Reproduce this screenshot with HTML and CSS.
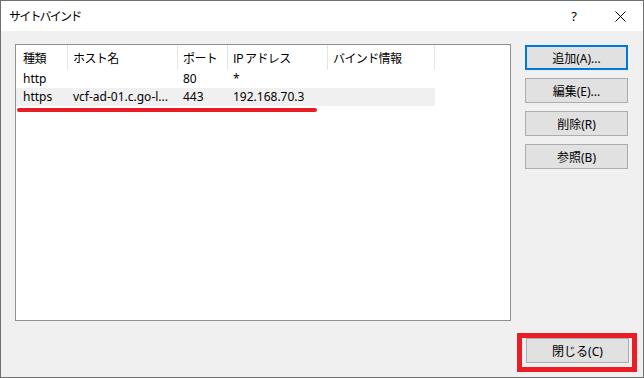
FILE: index.html
```html
<!DOCTYPE html>
<html lang="ja">
<head>
<meta charset="utf-8">
<title>サイトバインド</title>
<link rel="stylesheet" href="styles.css">
</head>
<body>
<div class="window">
  <div class="titlebar">
    <span class="title">サイトバインド</span>
    <div class="title-actions">
      <span class="help">?</span>
      <span class="close">
        <svg width="11" height="11" viewBox="0 0 11 11"><path d="M0.5 0.5 L10.5 10.5 M10.5 0.5 L0.5 10.5" stroke="#000" stroke-width="1" fill="none"/></svg>
      </span>
    </div>
  </div>
  <div class="content">
    <div class="main">
      <div class="listview">
        <div class="lv-header lv-grid">
          <div class="hcell first">種類</div>
          <div class="hcell">ホスト名</div>
          <div class="hcell">ポート</div>
          <div class="hcell">IP アドレス</div>
          <div class="hcell">バインド情報</div>
        </div>
        <div class="lv-row lv-grid">
          <div class="cell first">http</div>
          <div class="cell"></div>
          <div class="cell">80</div>
          <div class="cell">*</div>
          <div class="cell"></div>
        </div>
        <div class="lv-row lv-grid selected">
          <div class="cell first">https</div>
          <div class="cell">vcf-ad-01.c.go-l...</div>
          <div class="cell">443</div>
          <div class="cell">192.168.70.3</div>
          <div class="cell"></div>
          <span class="underline"></span>
        </div>
      </div>
      <div class="side-buttons">
        <button class="btn focused">追加(A)...</button>
        <button class="btn">編集(E)...</button>
        <button class="btn">削除(R)</button>
        <button class="btn">参照(B)</button>
      </div>
    </div>
    <div class="footer">
      <div class="close-wrap">
        <button class="btn">閉じる(C)</button>
        <span class="highlight-box"></span>
      </div>
    </div>
  </div>
</div>
</body>
</html>
```

FILE: styles.css
```css
* { box-sizing: border-box; }
html, body { margin: 0; padding: 0; }
body {
  width: 644px;
  height: 378px;
  font-family: "Segoe UI", "Noto Sans", "Noto Sans CJK JP", sans-serif;
  font-size: 12px;
  color: #000;
  background: #f0f0f0;
  overflow: hidden;
}
.window {
  width: 644px;
  height: 378px;
  border: 1px solid #6f6f6f;
  background: #f0f0f0;
  display: flex;
  flex-direction: column;
}
.titlebar {
  height: 30px;
  background: #fff;
  display: flex;
  align-items: center;
  justify-content: space-between;
  padding-left: 8px;
  flex: none;
}
.title {
  font-family: "Noto Sans CJK JP", sans-serif;
  font-size: 12px;
  letter-spacing: -1.8px;
  line-height: 16px;
}
.title-actions {
  display: flex;
  align-items: center;
  height: 100%;
}
.help {
  font-family: "Noto Sans", sans-serif;
  font-size: 13px;
  width: 46px;
  text-align: center;
  line-height: 16px;
}
.close {
  width: 46px;
  height: 30px;
  display: flex;
  align-items: center;
  justify-content: center;
}
.close svg { display: block; }
.content {
  flex: 1;
  display: flex;
  flex-direction: column;
  padding: 13px 14px 14px 14px;
}
.main {
  display: flex;
  gap: 14px;
}
.listview {
  width: 496px;
  height: 277px;
  background: #fff;
  border: 1px solid #8e8f94;
  flex: none;
}
.lv-grid {
  display: grid;
  grid-template-columns: 52px 110px 50px 100px 107px;
  width: 419px;
  position: relative;
}
.lv-header { height: 25px; }
.hcell {
  border-right: 1px solid #e5e5e5;
  padding-left: 5px;
  display: flex;
  align-items: center;
  height: 25px;
  white-space: nowrap;
  font-family: "Noto Sans CJK JP", sans-serif;
  letter-spacing: -0.6px;
}
.hcell.first { padding-left: 7px; }
.lv-row { height: 18px; }
.cell {
  padding-left: 5px;
  line-height: 18px;
  white-space: nowrap;
  overflow: hidden;
}
.cell.first { padding-left: 7px; }
.lv-row.selected { background: #f0f0f0; }
.underline {
  position: absolute;
  left: 1px;
  top: 20px;
  width: 300px;
  height: 4px;
  border-radius: 2px;
  background: #ea1c24;
}
.side-buttons {
  display: flex;
  flex-direction: column;
  gap: 8px;
  padding-top: 1px;
}
.btn {
  width: 103px;
  height: 25px;
  background: #e1e1e1;
  border: 1px solid #adadad;
  font-family: "Segoe UI", "Noto Sans", "Noto Sans CJK JP", sans-serif;
  font-size: 12px;
  color: #000;
  padding: 0;
  margin: 0;
  display: flex;
  align-items: center;
  justify-content: center;
}
.btn.focused { border: 2px solid #0078d7; }
.footer {
  margin-top: auto;
  display: flex;
  justify-content: flex-end;
}
.close-wrap {
  position: relative;
}
.highlight-box {
  position: absolute;
  left: -9px;
  top: -5px;
  width: 120px;
  height: 39px;
  border: 5px solid #ea1c24;
}
```
